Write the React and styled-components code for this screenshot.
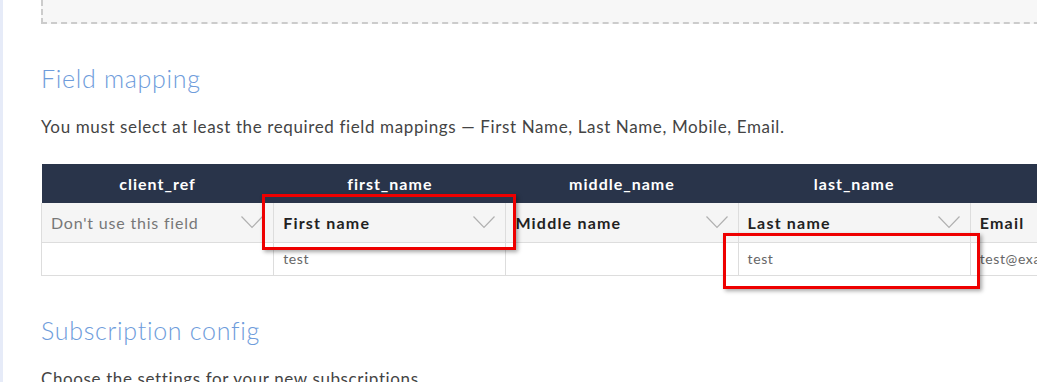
import React from "react";
import styled, { createGlobalStyle } from "styled-components";

const Global = createGlobalStyle`
  html, body { margin: 0; padding: 0; background: #fff; overflow: hidden; }
  body { font-family: Lato, "Open Sans", sans-serif; }
`;

const Page = styled.div`
  display: flex;
  width: 1037px;
  height: 382px;
  overflow: hidden;
  border-left: 3px solid #e6ebf8;
  box-sizing: border-box;
`;

const Content = styled.div`
  padding-left: 38px;
  width: 1400px;
  flex-shrink: 0;
`;

const DropZone = styled.div`
  height: 22px;
  background: #f7f7f7;
  border: 2px dashed #cccccc;
  border-top: none;
`;

const Heading = styled.h2`
  margin: 36px 0 0;
  font-family: Lato, sans-serif;
  font-weight: 300;
  font-size: 25px;
  line-height: 36px;
  letter-spacing: 0.7px;
  color: #6e9cdb;
`;

const Para = styled.p`
  margin: 19px 0 0;
  font-size: 17px;
  line-height: 24px;
  letter-spacing: 0.62px;
  color: #444;
`;

const TableWrap = styled.div`
  position: relative;
  margin-top: 25px;
`;

const Table = styled.table`
  border-collapse: collapse;
  table-layout: fixed;
  width: ${(p) => p.$cols * 232.4}px;
`;

const HeadCell = styled.th`
  background: #29344a;
  color: #fff;
  font-weight: 700;
  font-size: 16px;
  letter-spacing: 1px;
  height: 39px;
  padding: 0;
  text-align: center;
  box-sizing: border-box;
`;

const SelectCell = styled.td`
  background: #f5f5f5;
  border: 1px solid #dddddd;
  border-top: none;
  height: 39px;
  padding: 0 10px 0 9px;
  box-sizing: border-box;
`;

const SelectInner = styled.div`
  display: flex;
  align-items: center;
  justify-content: space-between;
  font-size: 16px;
  font-weight: ${(p) => (p.$used ? 700 : 400)};
  letter-spacing: ${(p) => (p.$used ? "1.2px" : "0.8px")};
  color: ${(p) => (p.$used ? "#222" : "#777")};
  white-space: nowrap;
  overflow: hidden;
`;

const DataCell = styled.td`
  background: #fff;
  border: 1px solid #dddddd;
  height: 33px;
  padding: 0 8px 0 9px;
  font-size: 14px;
  letter-spacing: 0.6px;
  color: #666;
  white-space: nowrap;
  overflow: hidden;
  box-sizing: border-box;
`;

const Highlight = styled.div`
  position: absolute;
  left: ${(p) => p.$x}px;
  top: ${(p) => p.$y}px;
  width: ${(p) => p.$w}px;
  height: ${(p) => p.$h}px;
  border: 3px solid #ee0000;
  box-sizing: border-box;
  box-shadow: 2px 2px 4px rgba(0, 0, 0, 0.35);
  pointer-events: none;
`;

const Chevron = () => (
  <svg width="22" height="13" viewBox="0 0 22 13" style={{ flexShrink: 0 }}>
    <polyline points="0.5,0.5 11,11.5 21.5,0.5" fill="none" stroke="#b0b0b0" strokeWidth="1.2" />
  </svg>
);

const columns = [
  { key: "client_ref", label: "Don't use this field", used: false, value: "" },
  { key: "first_name", label: "First name", used: true, value: "test" },
  { key: "middle_name", label: "Middle name", used: true, value: "" },
  { key: "last_name", label: "Last name", used: true, value: "test" },
  { key: "email", label: "Email", used: true, value: "test@example.com" },
];

export default function App() {
  return (
    <>
      <Global />
      <Page>
        <Content>
          <DropZone />
          <Heading>Field mapping</Heading>
          <Para>
            You must select at least the required field mappings — First Name, Last Name, Mobile, Email.
          </Para>
          <TableWrap>
            <Table $cols={columns.length}>
              <thead>
                <tr>
                  {columns.map((c) => (
                    <HeadCell key={c.key}>{c.key}</HeadCell>
                  ))}
                </tr>
              </thead>
              <tbody>
                <tr>
                  {columns.map((c) => (
                    <SelectCell key={c.key}>
                      <SelectInner $used={c.used}>
                        <span>{c.label}</span>
                        <Chevron />
                      </SelectInner>
                    </SelectCell>
                  ))}
                </tr>
                <tr>
                  {columns.map((c) => (
                    <DataCell key={c.key}>{c.value}</DataCell>
                  ))}
                </tr>
              </tbody>
            </Table>
            <Highlight $x={221} $y={30} $w={254} $h={56} />
            <Highlight $x={682} $y={69} $w={257} $h={56} />
          </TableWrap>
          <Heading>Subscription config</Heading>
          <Para>Choose the settings for your new subscriptions.</Para>
        </Content>
      </Page>
    </>
  );
}
